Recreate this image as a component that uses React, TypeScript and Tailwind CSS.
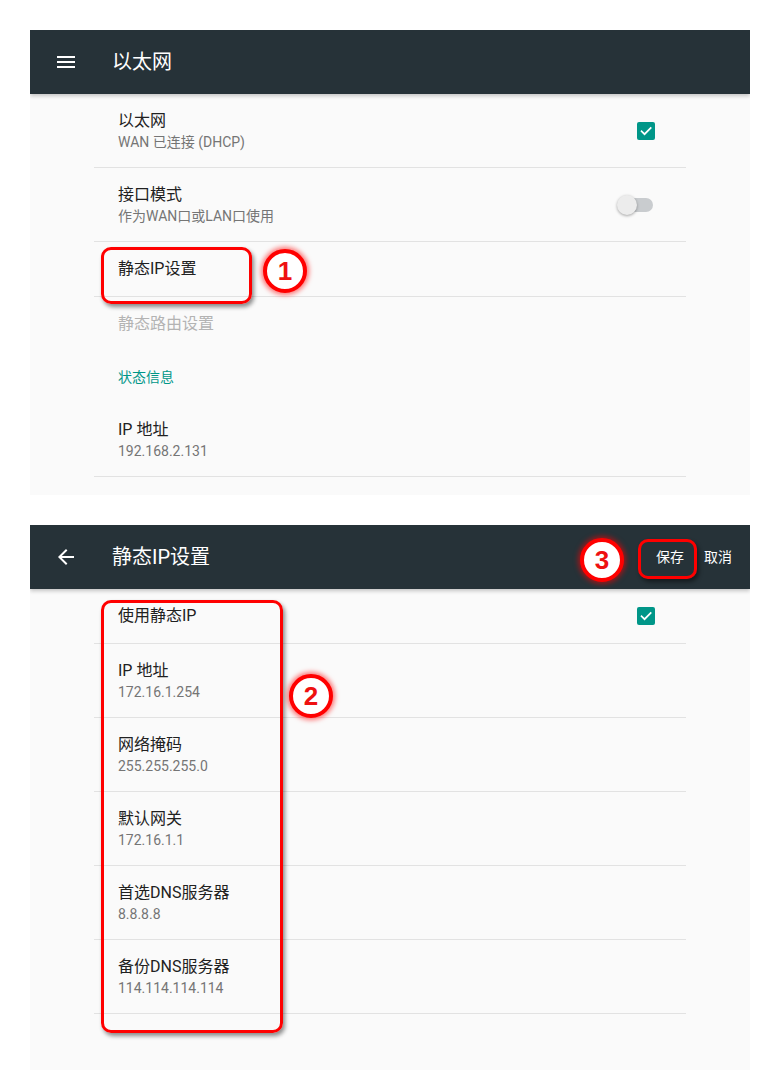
import React from "react";

const FONT = { fontFamily: "Roboto, 'Noto Sans CJK SC', sans-serif" };

function MenuIcon() {
  return (
    <svg width="24" height="24" viewBox="0 0 24 24" fill="#ffffff">
      <path d="M3 18h18v-2H3v2zm0-5h18v-2H3v2zm0-7v2h18V6H3z" />
    </svg>
  );
}

function BackIcon() {
  return (
    <svg width="24" height="24" viewBox="0 0 24 24" fill="#ffffff">
      <path d="M20 11H7.83l5.59-5.59L12 4l-8 8 8 8 1.41-1.41L7.83 13H20v-2z" />
    </svg>
  );
}

function Checkbox() {
  return (
    <div className="w-[18px] h-[18px] rounded-[2px] bg-[#009688] flex items-center justify-center">
      <svg width="14" height="14" viewBox="0 0 24 24" fill="none">
        <path d="M4.5 12.5l5 5L20 7" stroke="#ffffff" strokeWidth="3" strokeLinecap="square" />
      </svg>
    </div>
  );
}

function Switch() {
  return (
    <div className="relative w-[36px] h-[20px]">
      <div className="absolute left-[3px] top-[3px] w-[33px] h-[14px] rounded-full bg-[#c9cccf]" />
      <div className="absolute left-0 top-0 w-[20px] h-[20px] rounded-full bg-[#ececec] shadow-[0_1px_3px_rgba(0,0,0,0.35)]" />
    </div>
  );
}

function Divider() {
  return <div className="h-px bg-[#e2e2e2]" />;
}

function TwoLine({ title, summary, right, rightPad }: { title: string; summary: string; right?: React.ReactNode; rightPad?: string }) {
  return (
    <div className={`flex items-center h-[73px] pl-[24px] ${rightPad ?? "pr-[31px]"}`}>
      <div className="flex-1 flex flex-col">
        <div className="text-[16px] leading-[22px] text-[#212121]">{title}</div>
        <div className="text-[14px] leading-[20px] text-[#757575]">{summary}</div>
      </div>
      {right}
    </div>
  );
}

function OneLine({ title, color, right }: { title: string; color?: string; right?: React.ReactNode }) {
  return (
    <div className="flex items-center h-[54px] pl-[24px] pr-[31px]">
      <div className={`flex-1 text-[16px] leading-[22px] ${color ?? "text-[#212121]"}`}>{title}</div>
      {right}
    </div>
  );
}

function Badge({ n }: { n: string }) {
  return (
    <div className="w-[44px] h-[44px] rounded-full bg-white border-[4px] border-[#ff0000] shadow-[0_0_5px_2px_rgba(255,0,0,0.55)] flex items-center justify-center">
      <span className="text-[#ee1111] text-[26px] font-bold leading-none" style={{ fontFamily: "'Liberation Sans', sans-serif" }}>
        {n}
      </span>
    </div>
  );
}

function Toolbar({ icon, title, actions }: { icon: React.ReactNode; title: string; actions?: React.ReactNode }) {
  return (
    <div className="relative z-10 h-[64px] bg-[#263238] flex items-center pl-[24px] pr-[18px] shadow-[0_2px_4px_rgba(0,0,0,0.22)]">
      <div className="w-[24px] h-[24px]">{icon}</div>
      <div className="ml-[34px] flex-1 text-white text-[20px] leading-[28px]">{title}</div>
      {actions}
    </div>
  );
}

export default function App() {
  return (
    <div className="relative w-[780px] h-[1070px] bg-white overflow-hidden" style={FONT}>
      <div className="ml-[30px] pt-[30px] w-[720px]">
        {/* Panel 1 */}
        <div className="h-[465px] bg-[#fafafa] overflow-hidden">
          <Toolbar icon={<MenuIcon />} title="以太网" />
          <div className="ml-[64px] w-[592px]">
            <TwoLine title="以太网" summary="WAN 已连接 (DHCP)" right={<Checkbox />} />
            <Divider />
            <TwoLine title="接口模式" summary="作为WAN口或LAN口使用" right={<Switch />} rightPad="pr-[33px]" />
            <Divider />
            <OneLine title="静态IP设置" />
            <Divider />
            <OneLine title="静态路由设置" color="text-[#b3b3b3]" />
            <div className="pl-[24px] pt-[16px] pb-[16px] text-[14px] leading-[20px] text-[#009688]">状态信息</div>
            <TwoLine title="IP 地址" summary="192.168.2.131" />
            <Divider />
          </div>
        </div>

        {/* Panel 2 */}
        <div className="mt-[30px] h-[545px] bg-[#fafafa] overflow-hidden">
          <Toolbar
            icon={<BackIcon />}
            title="静态IP设置"
            actions={
              <div className="flex items-center gap-[20px] text-white text-[14px] leading-[20px]">
                <span>保存</span>
                <span>取消</span>
              </div>
            }
          />
          <div className="ml-[64px] w-[592px]">
            <OneLine title="使用静态IP" right={<Checkbox />} />
            <Divider />
            <TwoLine title="IP 地址" summary="172.16.1.254" />
            <Divider />
            <TwoLine title="网络掩码" summary="255.255.255.0" />
            <Divider />
            <TwoLine title="默认网关" summary="172.16.1.1" />
            <Divider />
            <TwoLine title="首选DNS服务器" summary="8.8.8.8" />
            <Divider />
            <TwoLine title="备份DNS服务器" summary="114.114.114.114" />
            <Divider />
          </div>
        </div>
      </div>

      {/* Annotations */}
      <div className="absolute z-20 left-[101px] top-[247px] w-[151px] h-[57px] rounded-[10px] border-[3px] border-[#ff0000] shadow-[2px_3px_4px_rgba(0,0,0,0.45)]" />
      <div className="absolute z-20 left-[263px] top-[249px]">
        <Badge n="1" />
      </div>
      <div className="absolute z-20 left-[101px] top-[600px] w-[182px] h-[433px] rounded-[10px] border-[3px] border-[#ff0000] shadow-[2px_3px_4px_rgba(0,0,0,0.45)]" />
      <div className="absolute z-20 left-[289px] top-[674px]">
        <Badge n="2" />
      </div>
      <div className="absolute z-20 left-[638px] top-[539px] w-[59px] h-[40px] rounded-[10px] border-[3px] border-[#ff0000] shadow-[2px_3px_4px_rgba(0,0,0,0.45)]" />
      <div className="absolute z-20 left-[580px] top-[538px]">
        <Badge n="3" />
      </div>
    </div>
  );
}
